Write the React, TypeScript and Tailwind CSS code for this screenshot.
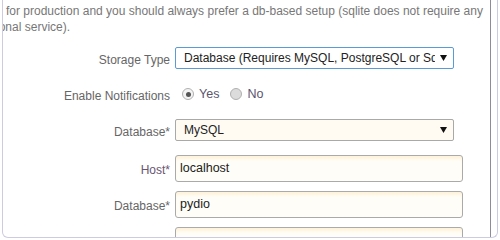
import React from "react";

function SelectBox({ value, focused }: { value: string; focused?: boolean }) {
  return (
    <div
      className={
        "relative flex h-[22px] w-[279px] items-center rounded-[2px] border pl-[8px] pr-[18px] text-[12px] text-[#222] " +
        (focused ? "border-[#5b9bd5] bg-white" : "border-[#a9a9a9] bg-[#fffbf2]")
      }
    >
      <span className="block min-w-0 flex-1 overflow-hidden whitespace-nowrap">{value}</span>
      <svg
        width="7"
        height="6"
        viewBox="0 0 7 6"
        className="absolute right-[6px] top-[7px]"
      >
        <polygon points="0,0 7,0 3.5,6" fill="#111" />
      </svg>
    </div>
  );
}

function TextBox({ value }: { value: string }) {
  return (
    <div className="flex h-[27px] w-[288px] items-center rounded-[3px] border border-[#aaa] bg-[#fffdf7] pl-[4px] text-[12.5px] text-[#222] shadow-[inset_0_4px_3px_-1px_#fff3dd]">
      {value}
    </div>
  );
}

function Radio({ checked }: { checked?: boolean }) {
  return (
    <span
      className={
        "flex h-[12px] w-[12px] items-center justify-center rounded-full border border-[#b0b0b0] " +
        (checked ? "bg-[#f4f4f4]" : "bg-[#dcdcdc]")
      }
    >
      {checked && <span className="h-[5px] w-[5px] rounded-full bg-[#555]" />}
    </span>
  );
}

function Row({
  label,
  labelColor = "text-[#666]",
  mt,
  children,
}: {
  label: string;
  labelColor?: string;
  mt: string;
  children: React.ReactNode;
}) {
  return (
    <div className={"flex items-center " + mt}>
      <div className={"w-[167px] pt-[3px] text-right text-[12px] " + labelColor}>
        {label}
      </div>
      <div className="ml-[5px]">{children}</div>
    </div>
  );
}

export default function App() {
  return (
    <div className="h-[240px] w-[500px] overflow-hidden bg-white font-['Liberation_Sans',Arial,sans-serif]">
      <div className="mx-[2px] flex h-[238px] overflow-hidden rounded-b-[6px] border-x border-b border-[#cdcbe0]">
        <div className="flex-1 overflow-hidden">
          <div className="pt-[3px] text-[12px] leading-[16px] text-[#777]">
            <div className="ml-[3px] whitespace-nowrap">
              for production and you should always prefer a db-based setup (sqlite does not require any
            </div>
            <div className="ml-[-33px] whitespace-nowrap">additional service).</div>
          </div>

          <Row label="Storage Type" mt="mt-[12px]">
            <SelectBox value="Database (Requires MySQL, PostgreSQL or Sqlite)" focused />
          </Row>

          <Row label="Enable Notifications" mt="mt-[14px]">
            <div className="flex h-[22px] items-center text-[12.5px] text-[#5a5570]">
              <span className="ml-[7px]">
                <Radio checked />
              </span>
              <span className="ml-[5px]">Yes</span>
              <span className="ml-[11px]">
                <Radio />
              </span>
              <span className="ml-[5px]">No</span>
            </div>
          </Row>

          <Row label="Database*" mt="mt-[14px]">
            <SelectBox value="MySQL" />
          </Row>

          <Row label="Host*" labelColor="text-[#6a5570]" mt="mt-[14px]">
            <TextBox value="localhost" />
          </Row>

          <Row label="Database*" mt="mt-[9px]">
            <TextBox value="pydio" />
          </Row>

          <Row label="User*" labelColor="text-[#6a5570]" mt="mt-[9px]">
            <TextBox value="" />
          </Row>
        </div>
        <div className="w-px bg-[#8d8d99]" />
        <div className="w-[6px]" />
      </div>
    </div>
  );
}
